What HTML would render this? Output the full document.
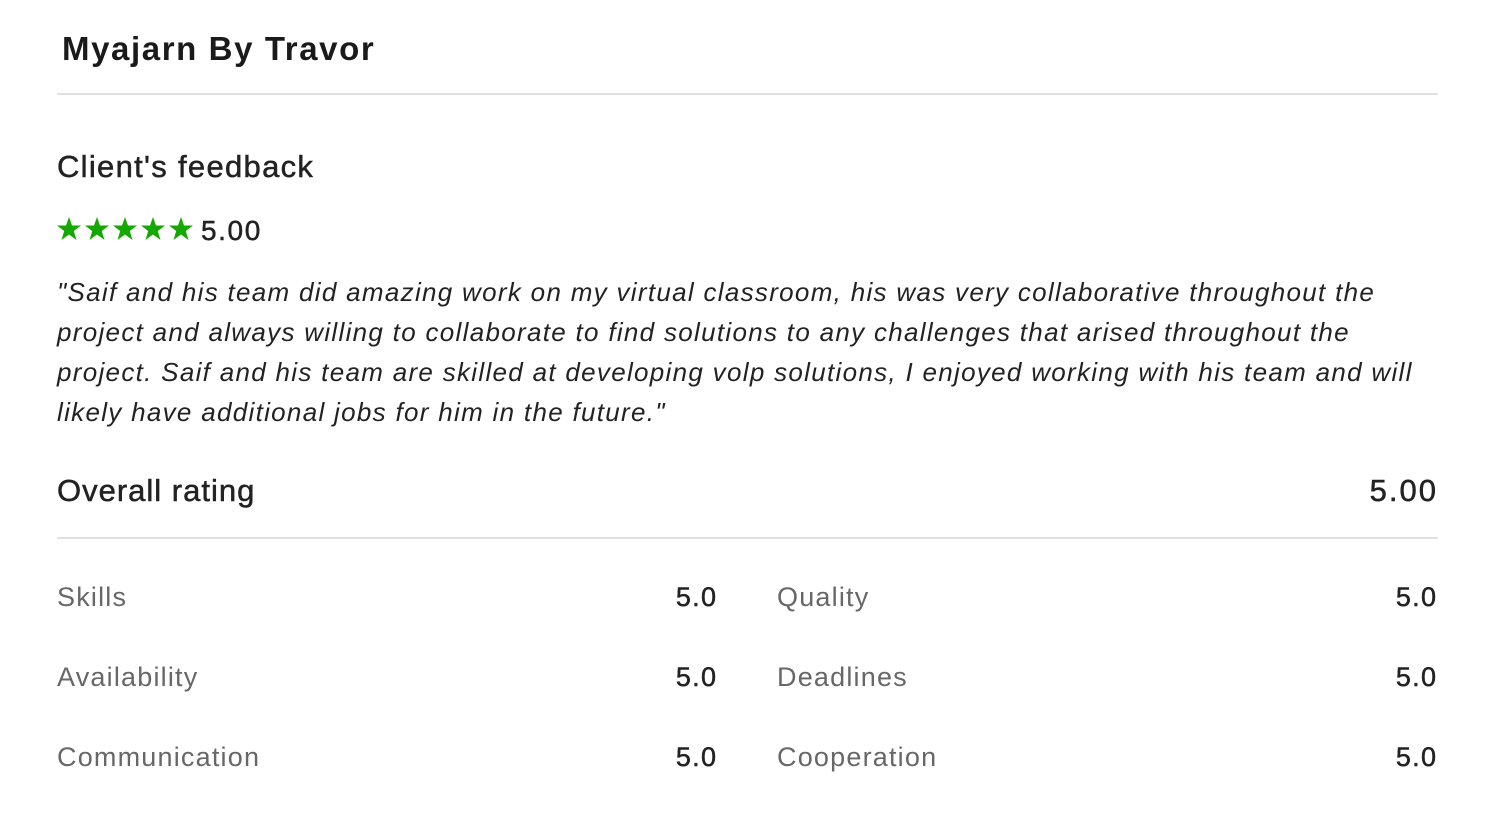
<!DOCTYPE html>
<html><head><meta charset="utf-8"><style>
body{margin:0;background:#fff;font-family:"Liberation Sans",Arial,sans-serif;color:#222;}
.a{position:absolute;white-space:nowrap;}
.hr{position:absolute;left:57px;width:1381px;height:2px;background:#e0e0e0;}
.l{font-size:27px;color:#676767;letter-spacing:1.2px;}
.v{font-size:27px;color:#222;text-align:right;letter-spacing:1.3px;margin-right:-1.3px;-webkit-text-stroke:0.5px #222;}
.m{-webkit-text-stroke:0.5px #222;}
</style></head><body>
<div class="a" style="left:62px;top:30px;font-size:33px;font-weight:bold;color:#1a1a1a;letter-spacing:1.6px;">Myajarn By Travor</div>
<div class="hr" style="top:93px;"></div>
<div class="a m" style="left:57px;top:149px;font-size:31px;letter-spacing:1.3px;">Client's feedback</div>
<div class="a" style="left:57px;top:216px;">
<svg width="140" height="28" viewBox="0 0 140 28">
<g fill="#14a800">
<polygon id="s" points="12,1 15,9.5 24,9.5 16.8,15 19.5,24 12,18.5 4.5,24 7.2,15 0,9.5 9,9.5"/>
<use href="#s" x="28"/><use href="#s" x="56"/><use href="#s" x="84"/><use href="#s" x="112"/>
</g></svg></div>
<div class="a m" style="left:201px;top:215px;font-size:28px;letter-spacing:1.6px;">5.00</div>
<div class="a" style="left:57px;top:272px;font-size:26px;font-style:italic;line-height:40px;white-space:normal;width:1440px;letter-spacing:1.3px;">"Saif and his team did amazing work on my virtual classroom, his was very collaborative throughout the<br>project and always willing to collaborate to find solutions to any challenges that arised throughout the<br>project. Saif and his team are skilled at developing volp solutions, I enjoyed working with his team and will<br>likely have additional jobs for him in the future."</div>
<div class="a m" style="left:57px;top:473px;font-size:31px;letter-spacing:1px;">Overall rating</div>
<div class="a m" style="right:63px;top:473px;font-size:31px;letter-spacing:2px;margin-right:-2px;">5.00</div>
<div class="hr" style="top:537px;"></div>
<div class="a l" style="left:57px;top:582px;">Skills</div>
<div class="a v" style="right:783px;top:582px;">5.0</div>
<div class="a l" style="left:777px;top:582px;">Quality</div>
<div class="a v" style="right:63px;top:582px;">5.0</div>
<div class="a l" style="left:57px;top:662px;">Availability</div>
<div class="a v" style="right:783px;top:662px;">5.0</div>
<div class="a l" style="left:777px;top:662px;">Deadlines</div>
<div class="a v" style="right:63px;top:662px;">5.0</div>
<div class="a l" style="left:57px;top:742px;">Communication</div>
<div class="a v" style="right:783px;top:742px;">5.0</div>
<div class="a l" style="left:777px;top:742px;">Cooperation</div>
<div class="a v" style="right:63px;top:742px;">5.0</div>
</body></html>
